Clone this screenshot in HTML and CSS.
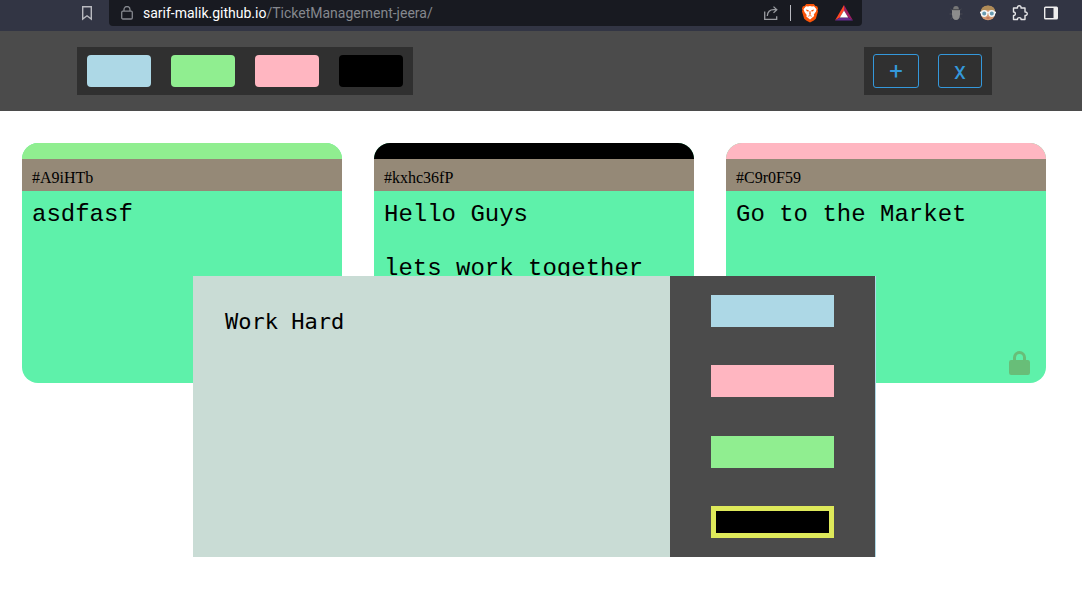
FILE: index.html
```html
<!DOCTYPE html>
<html lang="en">
<head>
<meta charset="utf-8">
<title>Ticket Management</title>
<link rel="stylesheet" href="styles.css">
</head>
<body>
<div class="browser-bar">
  <button class="icon-button bookmark" aria-label="Bookmark"><svg width="20" height="20" viewBox="0 0 20 20" fill="none" stroke="#b9bac0" stroke-width="1.4"><path d="M5.7 3.7h8.6v12.4L10 12.8l-4.3 3.3z"/></svg></button>
  <div class="address">
    <svg class="lock" width="12" height="14" viewBox="0 0 12 14" fill="none" stroke="#85888e" stroke-width="1.3"><rect x=".7" y="5.2" width="10.6" height="7.8" rx="1.2"/><path d="M3 5V3.5a3 3 0 0 1 6 0V5"/></svg>
    <a class="url" href="#"><span class="host">sarif-malik.github.io</span>/TicketManagement-jeera/</a>
    <div class="address-tools">
      <button class="icon-button" aria-label="Share"><svg width="16" height="16" viewBox="0 0 16 16" fill="none" stroke="#9a9ca1" stroke-width="1.3"><path d="M1.7 6.5v7.8h12v-3M4.3 11c.3-4.1 3-6.3 6.4-6.3h3M10.5 1.6l3.3 3.1-3.3 3.2"/></svg></button>
      <span class="divider"></span>
      <button class="icon-button" aria-label="Shields"><svg width="18" height="20" viewBox="0 0 18 20"><path fill="#fb5408" d="M5.3 1h7.4l1.8 2 1.6.2 1 2.2-.5 1.7.4 1.3-2.2 7.3-2 1.8L9 19.6l-3.8-2.1-2-1.8L1 8.400l.4-1.300L.9 5.400l1-2.200L3.500 3z"/><path fill="#fff" d="M5 3.200l2 .4L9 3l2 .6 2-.4 2.500 3-.5 2.200-2.200 3 .4 1.500L9 16.500l-3.700-3.100.4-1.500-2.200-3L2.500 6.200z"/><path fill="#fb5408" d="M5 6.600l2.800.7-.5 1.500L5.600 8zM13 6.600l-2.800.7.5 1.500L12.400 8zM8.600 8h.8l.4 3.200-.8.700-.8-.7zM6.800 13l2.200-.8 2.200.8-.5.400L9 12.900l-1.700.5z"/></svg></button>
      <button class="icon-button" aria-label="Rewards"><svg width="20" height="18" viewBox="0 0 20 18"><path fill="#ff4724" d="M10 1L1 16.500l4.800-3L10 6.500z"/><path fill="#9e1f63" d="M10 1l9 15.500-4.800-3L10 6.500z"/><path fill="#662d91" d="M1 16.500h18l-4.800-3H5.800z"/><path fill="#fff" d="M10 6.500l4.200 7H5.800z"/></svg></button>
    </div>
  </div>
  <div class="extensions">
    <button class="icon-button" aria-label="Debug extension"><svg width="16" height="18" viewBox="0 0 16 18"><path fill="none" stroke="#484a52" d="M5 7L2.500 5M11 7l2.500-2M4 10H1.500M12 10h2.500M5 13l-2.500 2M11 13l2.500 2"/><path fill="#777" d="M5.200 5q0-3 2.800-3t2.800 3z"/><path fill="#8c8c8c" d="M4 6h8v4.500Q11.500 16 8 16t-4-5.500z"/><path stroke="#565656" d="M4.500 5.700h7"/></svg></button>
    <button class="icon-button" aria-label="Profile extension"><svg width="18" height="18" viewBox="0 0 18 18"><circle cx="9" cy="9" r="7.300" fill="#d49a72"/><path fill="#b08c58" d="M1.700 8Q2 1.500 9 1.500T16.300 8L13 6H5z"/><path stroke="#f4f6f7" stroke-width="1.600" d="M1 8.500h16"/><circle cx="5.200" cy="9.500" r="2.700" fill="#669ab0" stroke="#f4f6f7" stroke-width="1.400"/><circle cx="12.800" cy="9.500" r="2.700" fill="#669ab0" stroke="#f4f6f7" stroke-width="1.400"/><path stroke="#b65d4e" d="M7.500 14h3"/></svg></button>
    <button class="icon-button" aria-label="Extensions"><svg width="16" height="18" viewBox="1 0 16 18" fill="none" stroke="#e4e4e6" stroke-width="1.400" stroke-linejoin="round"><path d="M2.500 4h4c-.5-3 4-3 3.500 0h4v4c3-.5 3 4 0 3.500V15.500h-4c.5-2.500-4-2.500-3.500 0h-4v-4c2.500.5 2.500-4 0-3.500z"/></svg></button>
    <button class="icon-button" aria-label="Side panel"><svg width="16" height="16" viewBox="0 0 16 16"><rect x="1.700" y="2.200" width="12.600" height="11.600" rx=".8" fill="none" stroke="#eee" stroke-width="1.400"/><path fill="#eee" d="M10.500 2H14v12h-3.500z"/></svg></button>
  </div>
</div>

<header class="toolbar">
  <div class="filters">
    <button class="filter lightblue" aria-label="Light blue"></button>
    <button class="filter lightgreen" aria-label="Light green"></button>
    <button class="filter lightpink" aria-label="Light pink"></button>
    <button class="filter black" aria-label="Black"></button>
  </div>
  <div class="actions">
    <button class="action add">+</button>
    <button class="action remove">x</button>
  </div>
</header>

<main class="board">
  <article class="ticket">
    <div class="ticket-color lightgreen"></div>
    <div class="ticket-id">#A9iHTb</div>
    <div class="ticket-text">asdfasf</div>
  </article>
  <article class="ticket">
    <div class="ticket-color black"></div>
    <div class="ticket-id">#kxhc36fP</div>
    <div class="ticket-text">Hello Guys

lets work together</div>
  </article>
  <article class="ticket">
    <div class="ticket-color lightpink"></div>
    <div class="ticket-id">#C9r0F59</div>
    <div class="ticket-text">Go to the Market</div>
    <button class="ticket-lock" aria-label="Locked"><svg width="21" height="24" viewBox="0 0 21 24"><path fill="#68be78" fill-rule="evenodd" d="M4 9V6.500a6.500 6.500 0 0 1 13 0V9h1.800A2.200 2.200 0 0 1 21 11.200v10.600a2.200 2.200 0 0 1-2.200 2.200H2.200A2.200 2.200 0 0 1 0 21.800V11.200A2.200 2.200 0 0 1 2.200 9zm3 0h7V6.500a3.500 3.500 0 0 0-7 0z"/></svg></button>
  </article>
</main>

<section class="modal">
  <textarea class="modal-text" aria-label="Task" spellcheck="false">Work Hard</textarea>
  <div class="priorities">
    <button class="priority lightblue" aria-label="Light blue"></button>
    <button class="priority lightpink" aria-label="Light pink"></button>
    <button class="priority lightgreen" aria-label="Light green"></button>
    <button class="priority black selected" aria-label="Black"></button>
  </div>
</section>
</body>
</html>
```
FILE: styles.css
```css
* {
  box-sizing: border-box;
}

body {
  margin: 0;
  background: #fff;
  color: #000;
  font-family: "Liberation Serif", serif;
}

button {
  padding: 0;
  border: 0;
  cursor: pointer;
}

.lightblue { background: lightblue; }
.lightgreen { background: lightgreen; }
.lightpink { background: lightpink; }
.black { background: #000; }

.browser-bar {
  display: flex;
  height: 31px;
  padding: 0 23px 5px 77px;
  background: #323544;
}

.icon-button {
  display: flex;
  align-items: center;
  justify-content: center;
  background: none;
}

.bookmark {
  width: 20px;
  margin-right: 12px;
}

.address {
  display: flex;
  flex: 1;
  align-items: center;
  padding: 0 8px 0 12px;
  border-radius: 0 0 4px 4px;
  background: #181a21;
}

.url {
  margin-left: 10px;
  color: #85888e;
  font: 14px/20px Roboto, sans-serif;
  text-decoration: none;
}

.host {
  color: #fff;
}

.address-tools {
  display: flex;
  align-items: center;
  margin-left: auto;
}

.divider {
  width: 1px;
  height: 16px;
  margin: 0 10px 0 11px;
  background: #b9bac0;
}

.address-tools .icon-button + .icon-button {
  margin-left: 15px;
}

.extensions {
  display: flex;
  align-items: center;
  gap: 15px;
  margin-left: 86px;
}

.toolbar {
  display: flex;
  align-items: center;
  justify-content: space-between;
  height: 80px;
  padding: 0 90px 0 77px;
  background: #4b4b4b;
}

.filters {
  display: flex;
  gap: 20px;
  padding: 8px 10px;
  background: #303030;
}

.filter {
  width: 64px;
  height: 32px;
  border-radius: 4px;
}

.actions {
  display: flex;
  align-items: center;
  gap: 19px;
  height: 48px;
  padding: 0 10px 0 9px;
  background: #303030;
}

.action {
  height: 34px;
  border: 1px solid #3498db;
  border-radius: 3px;
  background: none;
  color: #3498db;
  font: 24px/32px Roboto, sans-serif;
}

.add {
  width: 46px;
}

.remove {
  width: 44px;
}

.board {
  display: flex;
  flex-wrap: wrap;
  gap: 32px;
  padding: 32px 22px;
}

.ticket {
  position: relative;
  width: 320px;
  height: 240px;
  overflow: hidden;
  border-radius: 16px;
  background: #5ef1aa;
}

.ticket-color {
  height: 16px;
}

.ticket-id {
  height: 32px;
  padding: 10px 10px 0;
  background: #958977;
  font-size: 16px;
  line-height: 18px;
}

.ticket-text {
  padding: 10px;
  font: 24px/27px "Liberation Mono", monospace;
  white-space: pre-wrap;
}

.ticket-lock {
  position: absolute;
  right: 16px;
  bottom: 8px;
  background: none;
}

.ticket-lock svg {
  display: block;
}

.modal {
  position: absolute;
  top: 276px;
  left: 193px;
  display: flex;
  width: 683px;
  height: 281px;
  padding-right: 1px;
  background: lightblue;
}

.modal-text {
  width: 70%;
  padding: 32px;
  border: 0;
  outline: 0;
  resize: none;
  background: #c9dcd5;
  color: #000;
  font: 22px/28px "DejaVu Sans Mono", monospace;
}

.priorities {
  display: flex;
  width: 30%;
  flex-direction: column;
  align-items: center;
  justify-content: space-around;
  background: #4b4b4b;
}

.priority {
  width: 60%;
  height: 32px;
}

.selected {
  border: 5px solid #dee95a;
}
```
